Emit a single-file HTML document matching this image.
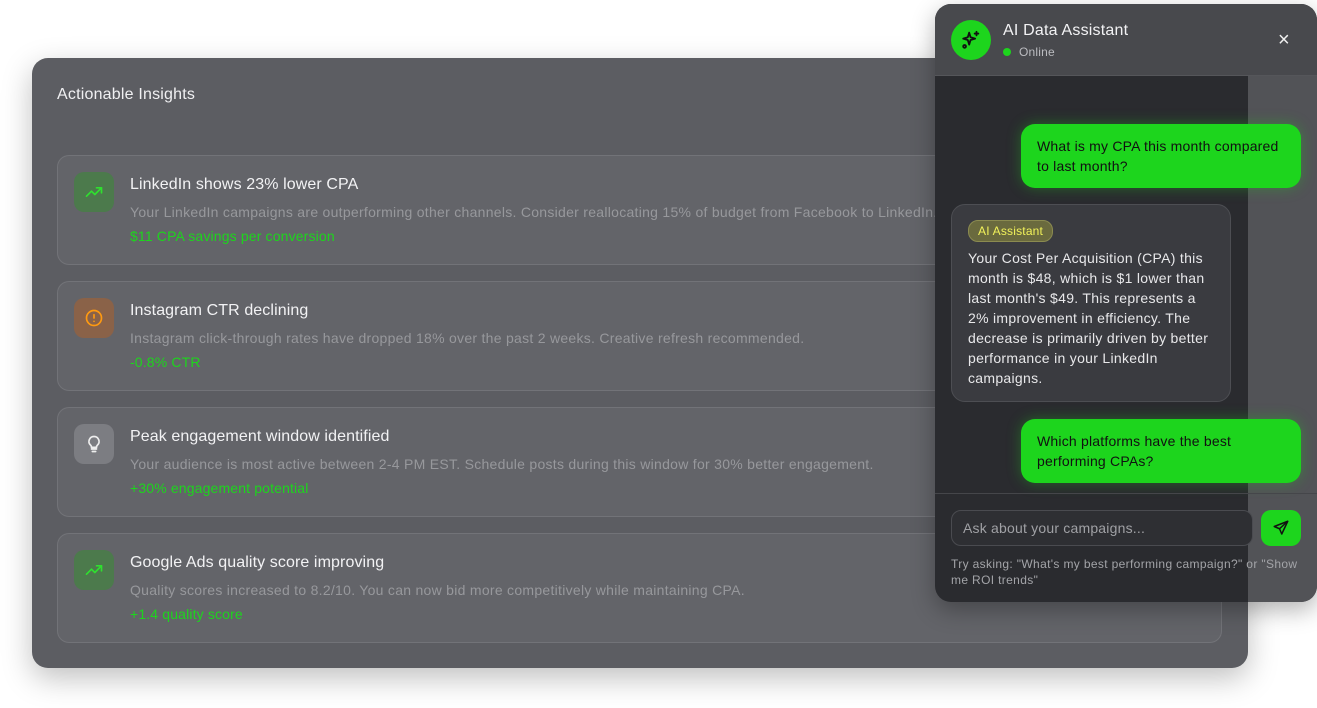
<!DOCTYPE html>
<html><head><style>
*{box-sizing:border-box;margin:0;padding:0}
body{width:1317px;height:708px;background:#fff;font-family:"Liberation Sans",sans-serif;position:relative;overflow:hidden}
.main{position:absolute;left:32px;top:58px;width:1216px;height:610px;background:#5c5d62;border-radius:16px;box-shadow:0 10px 30px rgba(0,0,0,.25)}
.main h2{position:absolute;left:25px;top:28px;font-size:16px;font-weight:normal;color:#f0f0f2;letter-spacing:.2px}
.card{position:absolute;left:25px;width:1165px;height:110px;background:#636469;border:1px solid rgba(255,255,255,.1);border-radius:12px}
.ic{position:absolute;left:16px;top:16px;width:40px;height:40px;border-radius:10px;display:flex;align-items:center;justify-content:center}
.t{position:absolute;left:72px;top:20px;font-size:16px;color:#f2f2f4;letter-spacing:.1px}
.d{position:absolute;left:72px;top:48px;font-size:14px;color:#97989c;white-space:nowrap;letter-spacing:.28px}
.g{position:absolute;left:72px;top:72px;font-size:14px;color:#1dd51d;letter-spacing:.15px}
.chat{position:absolute;left:935px;top:4px;width:382px;height:598px;border-radius:16px;overflow:hidden;background:#2a2b2f;box-shadow:0 8px 24px rgba(0,0,0,.3)}
.hdr{position:absolute;left:0;top:0;width:382px;height:72px;background:#48494d;border-bottom:1px solid #55565a}
.strip{position:absolute;left:313px;top:72px;width:69px;height:526px;background:#525357}
.av{position:absolute;left:16px;top:16px;width:40px;height:40px;border-radius:50%;background:#1dd51d;display:flex;align-items:center;justify-content:center}
.u{position:absolute;background:#1dd51d;color:#111;font-size:14px;line-height:20px;padding:12px 16px;border-radius:14px;box-shadow:0 0 14px rgba(29,213,29,.35);letter-spacing:.2px}
.ai{position:absolute;left:16px;top:200px;width:280px;height:198px;background:#3a3b40;border:1px solid #4d4e53;border-radius:14px;padding:15px 16px;color:#e8e8ea;font-size:14px;line-height:20px;letter-spacing:.3px}
.badge{display:inline-block;background:#6a6a3e;border:1px solid #8b8b50;color:#f2f25a;font-size:12px;padding:2px 9px;border-radius:10px;line-height:16px;margin-bottom:6px;letter-spacing:.2px}
.foot{position:absolute;left:0;top:489px;width:382px;height:109px;border-top:1px solid #45464a}
</style></head><body>
<div class="main">
<h2>Actionable Insights</h2>
<div class="card" style="top:97px"><div class="ic" style="background:#4c7a4c"><svg width="20" height="20" viewBox="0 0 24 24" fill="none" stroke="#2fe02f" stroke-width="2" stroke-linecap="round" stroke-linejoin="round"><path d="M3 17l6-6 4 4 8-8"/><path d="M15 7h6v6"/></svg></div>
<div class="t">LinkedIn shows 23% lower CPA</div><div class="d">Your LinkedIn campaigns are outperforming other channels. Consider reallocating 15% of budget from Facebook to LinkedIn.</div><div class="g">$11 CPA savings per conversion</div></div>
<div class="card" style="top:223px"><div class="ic" style="background:#8a6248"><svg width="20" height="20" viewBox="0 0 24 24" fill="none" stroke="#ff9a10" stroke-width="2" stroke-linecap="round"><circle cx="12" cy="12" r="9"/><path d="M12 8v4M12 16h.01"/></svg></div>
<div class="t">Instagram CTR declining</div><div class="d">Instagram click-through rates have dropped 18% over the past 2 weeks. Creative refresh recommended.</div><div class="g">-0.8% CTR</div></div>
<div class="card" style="top:349px"><div class="ic" style="background:#7c7d82"><svg width="20" height="20" viewBox="0 0 24 24" fill="none" stroke="#eee" stroke-width="2" stroke-linecap="round"><path d="M9 18h6M10 21h4M12 3a6 6 0 0 0-4 10.5c.8.8 1 1.5 1 2.5h6c0-1 .2-1.7 1-2.5A6 6 0 0 0 12 3z"/></svg></div>
<div class="t">Peak engagement window identified</div><div class="d">Your audience is most active between 2-4 PM EST. Schedule posts during this window for 30% better engagement.</div><div class="g">+30% engagement potential</div></div>
<div class="card" style="top:475px"><div class="ic" style="background:#4c7a4c"><svg width="20" height="20" viewBox="0 0 24 24" fill="none" stroke="#2fe02f" stroke-width="2" stroke-linecap="round" stroke-linejoin="round"><path d="M3 17l6-6 4 4 8-8"/><path d="M15 7h6v6"/></svg></div>
<div class="t">Google Ads quality score improving</div><div class="d">Quality scores increased to 8.2/10. You can now bid more competitively while maintaining CPA.</div><div class="g">+1.4 quality score</div></div>
</div>
<div class="chat">
<div class="strip"></div>
<div class="hdr">
<div class="av"><svg width="22" height="22" viewBox="0 0 24 24" fill="none" stroke="#111" stroke-width="2" stroke-linejoin="round" stroke-linecap="round"><path d="M10 4l1.5 5 5 1.5-5 1.5L10 17l-1.5-5L3.5 10.5l5-1.5z"/><path d="M18 3v4M16 5h4"/><circle cx="5" cy="19" r="1.5"/></svg></div>
<div style="position:absolute;left:68px;top:18px;font-size:16px;color:#f2f2f4;letter-spacing:.2px">AI Data Assistant</div>
<div style="position:absolute;left:68px;top:44px;width:8px;height:8px;border-radius:50%;background:#1dd51d"></div>
<div style="position:absolute;left:84px;top:41px;font-size:12px;color:#bbbcc0;letter-spacing:.2px">Online</div>
<div style="position:absolute;left:343px;top:26px;font-size:20px;line-height:20px;color:#f0f0f0">&#215;</div>
</div>
<div class="u" style="left:86px;top:120px;width:280px">What is my CPA this month compared to last month?</div>
<div class="ai"><span class="badge">AI Assistant</span><br>Your Cost Per Acquisition (CPA) this month is $48, which is $1 lower than last month's $49. This represents a 2% improvement in efficiency. The decrease is primarily driven by better performance in your LinkedIn campaigns.</div>
<div class="u" style="left:86px;top:415px;width:280px">Which platforms have the best performing CPAs?</div>
<div class="foot">
<div style="position:absolute;left:16px;top:16px;width:302px;height:36px;border:1px solid #4a4b50;border-radius:10px;background:#2e2f33;padding:0 11px;line-height:34px;font-size:14px;color:#a0a1a5;letter-spacing:.2px">Ask about your campaigns...</div>
<div style="position:absolute;left:326px;top:16px;width:40px;height:36px;border-radius:10px;background:#1dd51d;display:flex;align-items:center;justify-content:center"><svg width="18" height="18" viewBox="0 0 24 24" fill="none" stroke="#111" stroke-width="2" stroke-linejoin="round"><path d="M21 3L3 10l7 3 3 7z"/><path d="M21 3L10 13"/></svg></div>
<div style="position:absolute;left:16px;top:62px;width:354px;font-size:12px;line-height:16px;color:#a3a4a8;letter-spacing:.35px">Try asking: "What's my best performing campaign?" or "Show me ROI trends"</div>
</div>
</div>
</body></html>
